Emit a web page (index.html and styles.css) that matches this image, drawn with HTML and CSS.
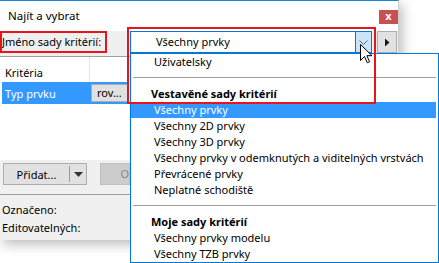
FILE: index.html
```html
<!DOCTYPE html>
<html>
<head>
<meta charset="utf-8">
<link rel="stylesheet" href="styles.css">
</head>
<body>
<div class="page">
  <div class="dialog">
    <div class="titlebar">
      <span class="title">Najít a vybrat</span>
      <span class="close">x</span>
    </div>
    <div class="body">
      <div class="toprow">
        <span class="label">Jméno sady kritérií:</span>
        <div class="combo">
          <span class="combo-text">Všechny prvky</span>
          <span class="combo-arrow"><svg width="9" height="5" viewBox="0 0 9 5"><path d="M0.5 0.5 L4.5 4.5 L8.5 0.5" fill="none" stroke="#5a6a7a" stroke-width="1"/></svg></span>
        </div>
        <div class="side-btn"><svg width="6" height="9" viewBox="0 0 6 9"><path d="M1 0.5 L5.5 4.5 L1 8.5 Z" fill="#1a1a1a"/></svg></div>
      </div>
      <div class="leftpane">
        <div class="rule"></div>
        <div class="table">
          <div class="thead"><span class="th1">Kritéria</span><span class="th2"></span></div>
          <div class="trow"><span class="tcell">Typ prvku</span><span class="rbtn">rov...</span></div>
        </div>
        <div class="btnrow">
          <div class="split">
            <span class="split-main">Přidat...</span>
            <span class="split-sep"></span>
            <span class="split-arrow"><svg width="9" height="5" viewBox="0 0 9 5"><path d="M0 0 L9 0 L4.5 5 Z" fill="#333"/></svg></span>
          </div>
          <div class="disabled-btn">O</div>
        </div>
        <div class="rule rule2"></div>
        <div class="info">
          <div>Označeno:</div>
          <div>Editovatelných:</div>
        </div>
      </div>
    </div>
  </div>

  <div class="dropdown">
    <div class="item">Uživatelsky</div>
    <div class="sep"></div>
    <div class="item head">Vestavěné sady kritérií</div>
    <div class="item selected">Všechny prvky</div>
    <div class="item">Všechny 2D prvky</div>
    <div class="item">Všechny 3D prvky</div>
    <div class="item">Všechny prvky v odemknutých a viditelných vrstvách</div>
    <div class="item">Převrácené prvky</div>
    <div class="item">Neplatné schodiště</div>
    <div class="sep"></div>
    <div class="item head">Moje sady kritérií</div>
    <div class="item">Všechny prvky modelu</div>
    <div class="item">Všechny TZB prvky</div>
  </div>

  <div class="hl hl-label"></div>
  <div class="hl hl-combo"></div>

  <svg class="cursor" width="13" height="20" viewBox="0 0 13 20">
    <path d="M0.5 0.5 L0.5 16.5 L4.5 12.5 L7.3 18.8 L9.6 17.8 L6.9 11.7 L12 11.7 Z" fill="#fff" stroke="#000" stroke-width="1" stroke-linejoin="miter"/>
  </svg>
</div>
</body>
</html>
```

FILE: styles.css
```css
* { box-sizing: border-box; }

html, body {
  margin: 0;
  padding: 0;
  background: #ffffff;
}

body {
  font-family: "Noto Sans", "Liberation Sans", sans-serif;
  font-size: 11px;
  color: #000;
  width: 439px;
  height: 263px;
  overflow: hidden;
}

.page {
  position: relative;
  width: 439px;
  height: 263px;
}

/* dialog */
.dialog {
  width: 399px;
  height: 240px;
  border-top: 1px solid #1883d7;
  border-right: 1px solid #cfcfcf;
  background: #f0f0f0;
  box-shadow: 3px 4px 12px rgba(0, 0, 0, 0.28);
  display: flex;
  flex-direction: column;
}

.titlebar {
  height: 30px;
  background: #ffffff;
  display: flex;
  align-items: center;
  justify-content: space-between;
  padding: 0 0 0 8px;
}

.title {
  font-size: 11.5px;
  color: #000;
  line-height: 16px;
}

.close {
  width: 19px;
  height: 14px;
  margin-top: 1px;
  background: #c75050;
  color: #fff;
  font-weight: 700;
  font-size: 11px;
  line-height: 12px;
  text-align: center;
}

.body {
  flex: 1;
  display: flex;
  flex-direction: column;
}

.toprow {
  height: 22px;
  display: flex;
  align-items: stretch;
}

.label {
  width: 130px;
  padding-left: 2px;
  line-height: 22px;
  white-space: nowrap;
}

.combo {
  width: 242px;
  border: 1px solid #0078d7;
  background: #fff;
  display: flex;
  align-items: stretch;
}

.combo-text {
  flex: 1;
  padding-left: 25px;
  line-height: 20px;
}

.combo-arrow {
  width: 16px;
  background: #cce4f7;
  border-left: 1px solid #0078d7;
  display: flex;
  align-items: center;
  justify-content: center;
}

.side-btn {
  width: 20px;
  margin-left: 5px;
  background: #e1e1e1;
  border: 1px solid #adadad;
  display: flex;
  align-items: center;
  justify-content: center;
}

/* left pane */
.leftpane {
  width: 130px;
  display: flex;
  flex-direction: column;
}

.rule {
  height: 1px;
  background: #a0a0a0;
  margin-top: 3px;
}

.table {
  width: 129px;
  height: 103px;
  background: #fff;
  display: flex;
  flex-direction: column;
}

.thead {
  height: 25px;
  display: flex;
}

.th1 {
  width: 90px;
  border-right: 1px solid #e5e5e5;
  padding-left: 5px;
  line-height: 32px;
}

.th2 { flex: 1; }

.trow {
  height: 22px;
  margin-left: 2px;
  background: #3399ff;
  display: flex;
  align-items: center;
  justify-content: space-between;
}

.tcell {
  color: #fff;
  padding-left: 3px;
}

.rbtn {
  width: 38px;
  height: 18px;
  background: #e1e1e1;
  border: 1px solid #adadad;
  line-height: 16px;
  padding-left: 5px;
  color: #000;
}

.btnrow {
  margin-top: 3px;
  height: 22px;
  display: flex;
  padding-left: 3px;
}

.split {
  width: 87px;
  background: #e1e1e1;
  border: 1px solid #adadad;
  display: flex;
  align-items: center;
}

.split-main {
  width: 65px;
  text-align: center;
}

.split-sep {
  width: 1px;
  height: 16px;
  background: #9a9a9a;
}

.split-arrow {
  flex: 1;
  display: flex;
  justify-content: center;
  align-items: center;
}

.disabled-btn {
  margin-left: 13px;
  flex: 1;
  background: #cccccc;
  border: 1px solid #bfbfbf;
  color: #838383;
  line-height: 20px;
  padding-left: 19px;
}

.rule2 {
  margin-top: 9px;
}

.info {
  margin-top: 6px;
  padding-left: 2px;
  line-height: 18px;
}

/* dropdown popup */
.dropdown {
  position: absolute;
  left: 130px;
  top: 53px;
  width: 309px;
  height: 210px;
  border: 1px solid #0078d7;
  background: #fff;
  display: flex;
  flex-direction: column;
  padding-right: 2px;
}

.item {
  height: 16px;
  line-height: 16px;
  padding-left: 23px;
  white-space: nowrap;
}

.item.head {
  font-weight: 700;
  padding-left: 20px;
}

.item.selected {
  background: #3399ff;
  color: #fff;
}

.sep {
  height: 16px;
  display: flex;
  align-items: center;
  padding-left: 2px;
}

.sep::before {
  content: "";
  flex: 1;
  height: 1px;
  background: #a0a0a0;
  margin-top: -1px;
}

/* red highlight annotations */
.hl {
  position: absolute;
  border: 2px solid #e8141c;
}

.hl-label {
  left: 0;
  top: 31px;
  width: 107px;
  height: 22px;
}

.hl-combo {
  left: 127px;
  top: 27px;
  width: 249px;
  height: 77px;
}

.cursor {
  position: absolute;
  left: 360px;
  top: 44px;
}
```
